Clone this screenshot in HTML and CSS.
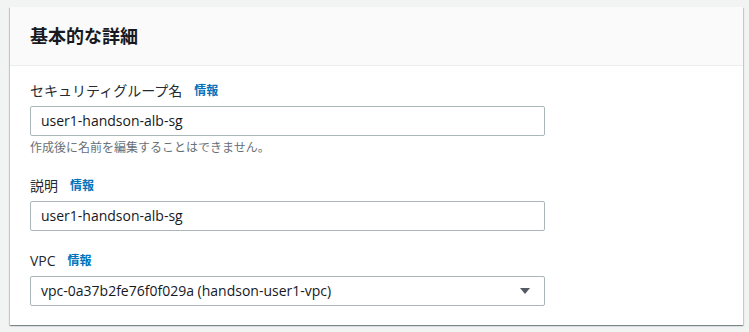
FILE: index.html
```html
<!DOCTYPE html>
<html lang="ja">
  <head>
    <meta charset="UTF-8" />
    <title>基本的な詳細</title>
    <link rel="stylesheet" href="styles.css">
  </head>
  <body>
    <div class="page">
      <div class="panel">
        <!-- ヘッダー -->
        <div class="panel-header">
          <h2>基本的な詳細</h2>
        </div>

        <div class="panel-body">
          <div class="field">
            <div class="field-label">セキュリティグループ名<a class="info-link">情報</a></div>
            <div class="text-input">user1-handson-alb-sg</div>
            <div class="field-hint">作成後に名前を編集することはできません。</div>
          </div>

          <div class="field">
            <div class="field-label">説明<a class="info-link">情報</a></div>
            <div class="text-input">user1-handson-alb-sg</div>
          </div>

          <div class="field">
            <div class="field-label">VPC<a class="info-link">情報</a></div>
            <div class="text-input select">
              <span>vpc-0a37b2fe76f0f029a (handson-user1-vpc)</span>
              <svg class="caret" width="12" height="8" viewBox="0 0 12 8"><path d="M1 1h10L6 7z" fill="#545b64"/></svg>
            </div>
          </div>
        </div>
      </div>
    </div>
  </body>
</html>
```

FILE: styles.css
```css
body {
  margin: 0;
  background-color: #f2f3f3;
  font-family: "Open Sans", "Noto Sans CJK JP", sans-serif;
  color: #16191f;
}

.page {
  padding: 7px 6px 7px 10px;
}

.panel {
  background-color: #fff;
  box-shadow: 0 1px 1px 0 rgba(0, 28, 36, 0.3), 1px 1px 1px 0 rgba(0, 28, 36, 0.15), -1px 1px 1px 0 rgba(0, 28, 36, 0.15);
}

.panel-header {
  height: 58px;
  padding: 0 20px;
  display: flex;
  align-items: center;
  background-color: #fafafa;
  border-bottom: 1px solid #eaeded;
}

.panel-header h2 {
  margin: 0;
  font-size: 18px;
  font-weight: 700;
  line-height: 22px;
}

.panel-body {
  padding: 14px 20px 19px;
  display: flex;
  flex-direction: column;
  gap: 19px;
}

.field-label {
  display: flex;
  align-items: center;
  height: 22px;
  font-size: 14px;
  line-height: 22px;
  margin-bottom: 4px;
  color: #232a31;
}

.info-link {
  margin-left: 12px;
  font-size: 12px;
  font-weight: 700;
  line-height: 22px;
  color: #0073bb;
}

.text-input {
  box-sizing: border-box;
  width: 515px;
  height: 30px;
  padding: 0 10px;
  border: 1px solid #aab7b8;
  border-radius: 2px;
  font-size: 14px;
  line-height: 28px;
}

.select {
  display: flex;
  align-items: center;
  justify-content: space-between;
}

.caret {
  margin-right: 3px;
}

.field-hint {
  margin-top: 4px;
  height: 16px;
  font-size: 12px;
  line-height: 16px;
  color: #687078;
}
```
